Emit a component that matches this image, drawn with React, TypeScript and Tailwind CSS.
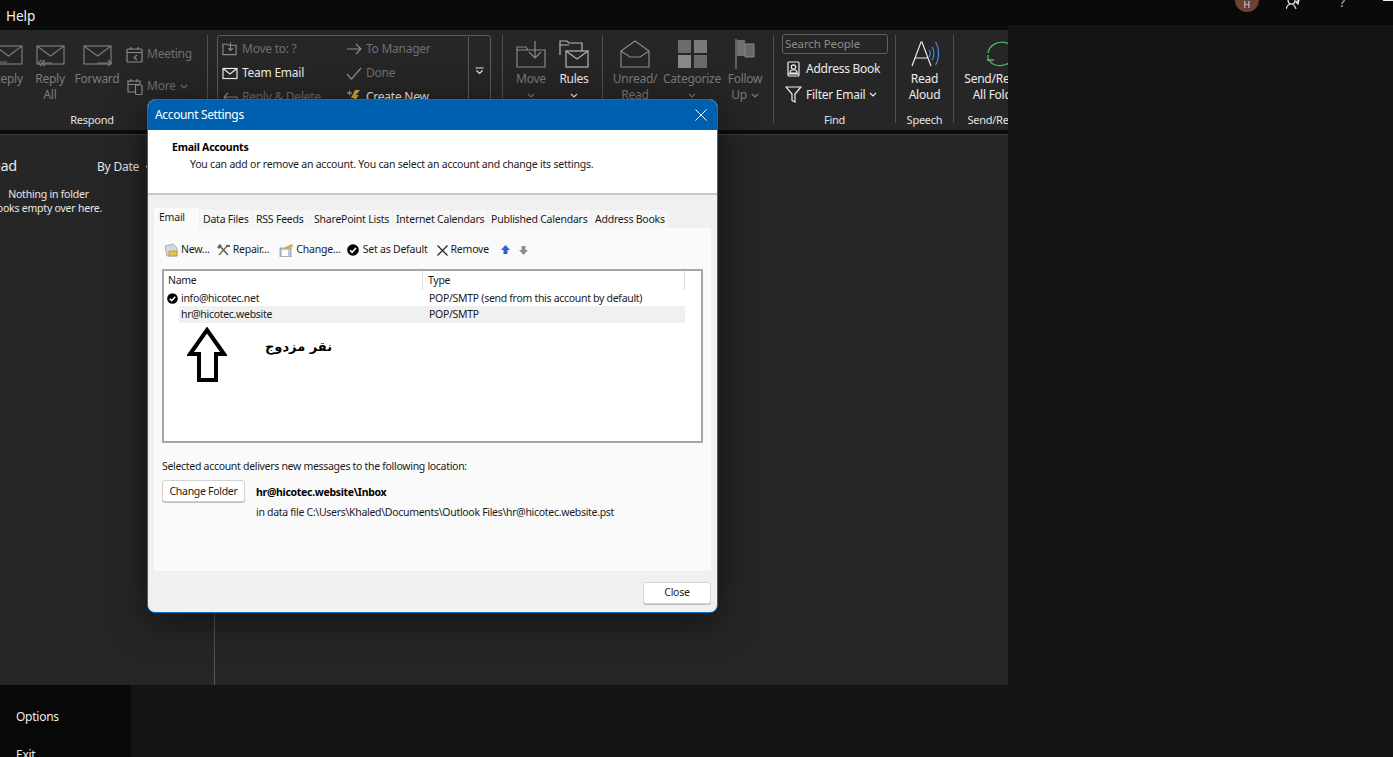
import type { ReactNode } from 'react';

// Outlook backstage behind the Account Settings dialog.

const Svg = ({ w = 28, h = 28, children, className = '' }: { w?: number; h?: number; children: ReactNode; className?: string }) => (
  <svg width={w} height={h} viewBox={`0 0 ${w} ${h}`} fill="none" stroke="currentColor" strokeWidth="1.2" className={className}>
    {children}
  </svg>
);

const Chevron = ({ className = '' }: { className?: string }) => (
  <svg width="8" height="5" viewBox="0 0 8 5" fill="none" stroke="currentColor" strokeWidth="1.2" className={className}>
    <path d="M1 1l3 3 3-3" />
  </svg>
);

const CheckDot = ({ size = 12 }: { size?: number }) => (
  <svg width={size} height={size} viewBox="0 0 12 12" className="shrink-0">
    <circle cx="6" cy="6" r="5.8" fill="#000" />
    <path d="M3 6.2l2.1 2.1L9 4" fill="none" stroke="#fff" strokeWidth="1.6" />
  </svg>
);

function RibbonBtn({ w, icon, lines, dim = false, chevron = false }: { w: number; icon: ReactNode; lines: string[]; dim?: boolean; chevron?: boolean }) {
  return (
    <div style={{ width: w }} className={`flex shrink-0 flex-col items-center pt-[10px] ${dim ? 'text-[#7b7b7b]' : 'text-[#ececec]'}`}>
      <div className="flex h-[28px] items-center justify-center">{icon}</div>
      <div className="mt-[3px] whitespace-nowrap text-center text-[12px] leading-[16px]">
        {lines.map((l, i) => (
          <div key={l} className="flex items-center justify-center gap-[4px]">
            {l}
            {chevron && lines.length > 1 && i === lines.length - 1 && <Chevron />}
          </div>
        ))}
        {chevron && lines.length === 1 && (
          <div className="flex h-[16px] items-center justify-center">
            <Chevron />
          </div>
        )}
      </div>
    </div>
  );
}

const RibbonDivider = ({ ml = 0 }: { ml?: number }) => (
  <div style={{ marginLeft: ml }} className="mt-[5px] h-[88px] w-px shrink-0 bg-[#505050]" />
);

function Group({ w, label, labelClass = '', children }: { w?: number; label: string; labelClass?: string; children: ReactNode }) {
  return (
    <div style={{ width: w }} className="flex shrink-0 flex-col">
      <div className="flex h-[78px] shrink-0">{children}</div>
      <div className={`shrink-0 text-center text-[11px] leading-[24px] text-[#e4e4e4] ${labelClass}`}>{label}</div>
    </div>
  );
}

const envelope = <><rect x="3" y="6" width="27" height="18" /><path d="M3 6l13.500 10L30 6" /></>;

function QuickStep({ icon, label, dim = false }: { icon: ReactNode; label: string; dim?: boolean }) {
  return (
    <div className={`flex h-[24px] items-center gap-[4px] whitespace-nowrap text-[12px] ${dim ? 'text-[#6f6f6f]' : 'text-[#ececec]'}`}>
      <span className="flex w-[16px] justify-center">{icon}</span>
      {label}
    </div>
  );
}

function Ribbon() {
  return (
    <div className="flex h-[100px] overflow-hidden bg-[#262626] font-['Noto_Sans',sans-serif] tracking-[-0.25px]">
      <div className="ml-[-13px] flex shrink-0">
        <Group label="Respond" labelClass="pr-[10px]">
          <RibbonBtn w={42} dim lines={['Reply']} icon={<Svg w={32} h={28}>{envelope}<path d="M15 22H5l3-3M5 22l3 3" /></Svg>} />
          <RibbonBtn w={42} dim lines={['Reply', 'All']} icon={<Svg w={32} h={28}>{envelope}<path d="M18 23H8l3-3M8 23l3 3M4 23l4-3M4 23l4 3" /></Svg>} />
          <RibbonBtn w={52} dim lines={['Forward']} icon={<Svg w={32} h={28}>{envelope}<path d="M16 23h14l-3-3M30 23l-3 3" /></Svg>} />
          <div className="flex w-[84px] flex-col pl-[3px] pt-[11px] text-[12px] text-[#6f6f6f]">
            <div className="flex h-[26px] items-center gap-[4px]">
              <Svg w={17} h={17} className="text-[#8a8a8a]"><rect x="1" y="3" width="15" height="13" rx="1" /><path d="M1 6.500h15M5 1v3M12 1v3M11 9l-3 2.500 3 2.500" /></Svg>
              Meeting
            </div>
            <div className="mt-[6px] flex h-[26px] items-center gap-[4px]">
              <Svg w={17} h={17} className="text-[#8a8a8a]"><path d="M9 14H2V3h12v3M1.500 6.500h12M5 1v3M11 1v3" /><rect x="9.500" y="7" width="6.500" height="9.500" rx="1" /></Svg>
              More
              <Chevron />
            </div>
          </div>
        </Group>
      </div>
      <RibbonDivider />
      <div className="ml-[9px] mt-[5px] flex h-[75px] w-[274px] shrink-0 rounded-[3px] border border-[#5c5c5c] pt-[1px]">
        <div className="flex w-[128px] shrink-0 flex-col pl-[4px]">
          <QuickStep dim label="Move to: ?" icon={<Svg w={17} h={16} className="text-[#8a8a8a]"><path d="M1 3h5l1 1h8v10H1zM9 1v8M6.500 7L9 9.500 11.500 7" /></Svg>} />
          <QuickStep label="Team Email" icon={<Svg w={16} h={13}><rect x="1" y="1.500" width="14" height="10" /><path d="M1 1.500l7 5.500 7-5.500" /></Svg>} />
          <QuickStep dim label="Reply & Delete" icon={<Svg w={16} h={14} className="text-[#8a8a8a]"><path d="M15 11V7H2M2 7l4-4M2 7l4 4" /></Svg>} />
        </div>
        <div className="flex w-[122px] shrink-0 flex-col">
          <QuickStep dim label="To Manager" icon={<Svg w={16} h={12} className="text-[#8a8a8a]"><path d="M1 6h14M10 1l5 5-5 5" /></Svg>} />
          <QuickStep dim label="Done" icon={<Svg w={16} h={13} className="text-[#8a8a8a]"><path d="M1 7l4.500 5L15 1" /></Svg>} />
          <QuickStep label="Create New" icon={
            <svg width="14" height="14" viewBox="0 0 14 14"><path d="M8 0h5L9 5h3L5 14l2-6H4z" fill="#e0a030" /><path d="M0 3h5M2.500 .5v5" stroke="#63b35a" strokeWidth="1.300" /></svg>
          } />
        </div>
        <div className="flex flex-1 justify-center border-l border-[#5c5c5c] pt-[30px] text-[#e4e4e4]">
          <svg width="9" height="8" viewBox="0 0 9 8" fill="none" stroke="currentColor" strokeWidth="1.2"><path d="M0.500 1h8M1.500 3.500L4.500 6.500 7.500 3.500" /></svg>
        </div>
      </div>
      <RibbonDivider ml={11} />
      <div className="ml-[6px] flex shrink-0">
        <RibbonBtn w={44} dim chevron lines={['Move']} icon={<Svg w={30} h={28} className="text-[#8a8a8a]"><path d="M1 7h9l2 3h17v17H1zM1 7v3h11M19 1v16M13 12l6 6 6-6" /></Svg>} />
        <RibbonBtn w={42} chevron lines={['Rules']} icon={<Svg w={30} h={30} className="text-[#b5b5b5]"><path d="M1 16V2h7l2 2h13v8M1 6h9" /><rect x="7" y="12" width="22" height="16" fill="#262626" /><path d="M7 12l11 8 11-8" /></Svg>} />
      </div>
      <RibbonDivider ml={7} />
      <div className="flex shrink-0 pl-[1px]">
        <RibbonBtn w={62} dim lines={['Unread/', 'Read']} icon={<Svg w={30} h={28} className="text-[#8a8a8a]"><path d="M1 11L15 1l14 10v16H1zM1 11l9 6h10l9-6" /></Svg>} />
        <RibbonBtn w={52} dim chevron lines={['Categorize']} icon={
          <svg width="29" height="28" viewBox="0 0 29 28"><path d="M0 0h13v13H0z" fill="#6b6b6b" /><path d="M16 0h13v13H16z" fill="#7a7a7a" /><path d="M0 15h13v13H0z" fill="#8a8a8a" /><path d="M16 15h13v13H16z" fill="#6b6b6b" /></svg>
        } />
        <RibbonBtn w={54} dim chevron lines={['Follow', 'Up']} icon={
          <svg width="20" height="30" viewBox="0 0 20 30"><path d="M1 0v30" stroke="#777" strokeWidth="1.500" /><path d="M2 1h8v16H2z" fill="#6f6f6f" /><path d="M10 5h9v13h-9z" fill="#666" stroke="#888" /></svg>
        } />
      </div>
      <RibbonDivider ml={1} />
      <Group w={121} label="Find">
        <div className="flex w-full flex-col pl-[8px] pt-[4px] text-[12px] text-[#ececec]">
          <div className="h-[20px] w-[106px] rounded-[3px] border border-[#5f5f5f] px-[2px] text-[11.500px] leading-[18px] tracking-[-0.1px] text-[#8c8c8c]">Search People</div>
          <div className="mt-[2px] flex h-[26px] items-center gap-[6px] whitespace-nowrap pl-[5px]">
            <Svg w={13} h={16}><rect x="1" y="1" width="11" height="14" rx="1" /><circle cx="6.500" cy="6" r="2.200" /><path d="M3 11c.500-3 6.500-3 7 0v1H3zM1 13h11" /></Svg>
            Address Book
          </div>
          <div className="flex h-[25px] items-center gap-[4px] whitespace-nowrap pl-[3px]">
            <Svg w={17} h={17}><path d="M1 1h15l-6 7v8l-3-1.500V8z" /></Svg>
            Filter Email
            <Chevron />
          </div>
        </div>
      </Group>
      <RibbonDivider />
      <Group w={57} label="Speech">
        <RibbonBtn w={57} lines={['Read', 'Aloud']} icon={
          <svg width="30" height="30" viewBox="0 0 30 30" fill="none" stroke="currentColor" strokeWidth="1.200">
            <path d="M2 27L11 3h1l9 24M5.500 19h13" />
            <path d="M19 11c1.500 2 1.500 5 0 7M22 8c2.500 3 2.500 10 0 13M25.500 3c4 6 4 17 0 23" stroke="#3f8fd6" />
          </svg>
        } />
      </Group>
      <RibbonDivider />
      <Group w={93} label="Send/Receive">
        <RibbonBtn w={93} lines={['Send/Receive', 'All Folders']} icon={
          <svg width="30" height="30" viewBox="0 0 30 30" fill="none" stroke="#54b765" strokeWidth="1.300">
            <path d="M2 14C3 6 14 0 23 5c2 1 3 3 4 5M28 17c-2 8-13 12-21 8-2-1-3-3-4-4M1 21h7M2 16v6" />
          </svg>
        } />
      </Group>
    </div>
  );
}

const tabs = [
  { label: 'Data Files', w: 52 },
  { label: 'RSS Feeds', w: 57 },
  { label: 'SharePoint Lists', w: 81 },
  { label: 'Internet Calendars', w: 94 },
  { label: 'Published Calendars', w: 103 },
  { label: 'Address Books', w: 76 },
];

function ToolItem({ icon, label, ml }: { icon: ReactNode; label: string; ml: number }) {
  return (
    <div style={{ marginLeft: ml }} className="flex shrink-0 items-center gap-[3px] whitespace-nowrap">
      {icon}
      {label}
    </div>
  );
}

function AccountDialog() {
  return (
    <div className="absolute left-[147px] top-[99px] flex h-[514px] w-[571px] flex-col overflow-hidden rounded-[8px] border border-[#0b6fc0] bg-[#f0f0f0] font-['Noto_Sans',sans-serif] text-[10.500px] tracking-[-0.22px] text-[#1a1a1a] shadow-[0_8px_40px_rgba(0,0,0,0.55)]">
      <div className="flex h-[30px] shrink-0 items-center justify-between bg-[#0060b0] pl-[7px] pr-[10px] text-[12px] tracking-[-0.35px] text-white">
        Account Settings
        <svg width="12" height="12" viewBox="0 0 12 12" stroke="#fff" strokeWidth="1"><path d="M.5.500l11 11M11.500.500l-11 11" /></svg>
      </div>
      <div className="h-[65px] shrink-0 border-b-2 border-[#c8c8c8] bg-white pl-[24px] pt-[9px]">
        <div className="font-bold leading-[16px] text-black">Email Accounts</div>
        <div className="ml-[18px] mt-[1px] leading-[16px]">You can add or remove an account. You can select an account and change its settings.</div>
      </div>
      <div className="mt-[13px] flex h-[20px] shrink-0 items-end pl-[6px]">
        <div className="h-[20px] w-[45px] bg-[#fafafa] pl-[5px] leading-[18px]">Email</div>
        <div className="flex h-[18px] items-start">
          {tabs.map((t) => (
            <div key={t.label} style={{ width: t.w }} className="ml-[1px] h-[18px] whitespace-nowrap bg-[#f6f6f6] pl-[3px] leading-[18px]">
              {t.label}
            </div>
          ))}
        </div>
      </div>
      <div className="mx-[6px] flex h-[343px] shrink-0 flex-col bg-[#fafafa] tracking-[-0.3px]">
        <div className="flex h-[41px] shrink-0 items-center pl-[10px] pt-[3px] tracking-[-0.22px]">
          <ToolItem ml={0} label="New..." icon={
            <svg width="14" height="14" viewBox="0 0 14 14"><path d="M1 3l8-2 4 4v8H3z" fill="#d8d8d8" stroke="#8a8a8a" strokeWidth=".6" /><path d="M5 8h8v5H5z" fill="#e6c050" stroke="#a98320" strokeWidth=".6" /></svg>
          } />
          <ToolItem ml={7} label="Repair..." icon={
            <svg width="13" height="13" viewBox="0 0 13 13" fill="none"><path d="M2 1l9 10" stroke="#555" strokeWidth="1.500" /><path d="M11 1L2 11" stroke="#8a6a30" strokeWidth="1.500" /><path d="M0 3l3-3 2 2-3 3zM9 1h4v2H9z" fill="#666" /></svg>
          } />
          <ToolItem ml={10} label="Change..." icon={
            <svg width="14" height="13" viewBox="0 0 14 13"><path d="M1 4h11v9H1z" fill="#b9cbe0" stroke="#6b7f95" strokeWidth=".6" /><path d="M3 6h6v6H3z" fill="#fff" /><path d="M6 3l7-3 1 3-7 2z" fill="#d9ac3c" /></svg>
          } />
          <ToolItem ml={6} label="Set as Default" icon={<span className="mr-[1px]"><CheckDot /></span>} />
          <ToolItem ml={9} label="Remove" icon={
            <svg width="11" height="11" viewBox="0 0 11 11" stroke="#222" strokeWidth="1.200"><path d="M.5.500l10 10M10.500.500l-10 10" /></svg>
          } />
          <svg width="9" height="10" viewBox="0 0 9 10" className="ml-[12px]"><path d="M4.500 0L9 5H6.500v4h-4V5H0z" fill="#2d63c8" /></svg>
          <svg width="9" height="10" viewBox="0 0 9 10" className="ml-[9px]"><path d="M4.500 10L9 5H6.500V1h-4v4H0z" fill="#8e8e8e" /></svg>
        </div>
        <div className="relative ml-[8px] h-[174px] w-[541px] shrink-0 border-2 border-[#a6a6a6] bg-white">
          <div className="flex h-[19px] items-center">
            <div className="h-full w-[259px] border-r border-[#dcdcdc] pl-[4px] leading-[18px]">Name</div>
            <div className="h-full w-[262px] border-r border-[#dcdcdc] pl-[5px] leading-[18px]">Type</div>
          </div>
          <div className="flex h-[16px] items-center leading-[16px]">
            <div className="flex w-[259px] items-center gap-[3px] pl-[3px]">
              <CheckDot size={11} />
              info@hicotec.net
            </div>
            <div className="pl-[6px]">POP/SMTP (send from this account by default)</div>
          </div>
          <div className="ml-[15px] flex h-[17px] w-[506px] items-center bg-[#f0f0f0] pt-[1px]">
            <div className="w-[244px] pl-[2px]">hr@hicotec.website</div>
            <div className="pl-[6px]">POP/SMTP</div>
          </div>
          {/* annotation pasted over the screenshot */}
          <svg width="40" height="56" viewBox="0 0 40 56" className="absolute left-[23px] top-[56px]">
            <path d="M20 3L37 27H29V53H12V27H3Z" fill="#fff" stroke="#000" strokeWidth="4" />
          </svg>
          <div dir="rtl" className="absolute left-[101px] top-[65px] font-['DejaVu_Sans',sans-serif] text-[13px] font-bold leading-[22px] tracking-normal text-black">
            نقر مزدوج
          </div>
        </div>
        <div className="ml-[8px] mt-[16px] leading-[14px]">Selected account delivers new messages to the following location:</div>
        <div className="ml-[8px] mt-[7px] flex">
          <div className="flex h-[22px] w-[83px] items-center justify-center rounded-[3px] border border-[#d2d2d2] bg-white pt-[1px] shadow-[0_1px_0_#bbb]">Change Folder</div>
          <div className="ml-[11px] pt-[4px] leading-[16px]">
            <div className="font-bold text-black">hr@hicotec.website\Inbox</div>
            <div className="mt-[4px]">in data file C:\Users\Khaled\Documents\Outlook Files\hr@hicotec.website.pst</div>
          </div>
        </div>
      </div>
      <div className="flex justify-end pr-[6px] pt-[11px]">
        <div className="flex h-[22px] w-[68px] items-center justify-center rounded-[3px] border border-[#d8d8d8] bg-white shadow-[0_1px_0_#bbb]">Close</div>
      </div>
    </div>
  );
}

export default function App() {
  return (
    <div className="relative flex h-[757px] w-[1393px] flex-col overflow-hidden bg-[#0a0a0a] font-['Noto_Sans',sans-serif]">
      <div className="flex h-[25px] shrink-0 items-start pl-[6px] text-[13.500px] leading-[32px] text-[#f2f2f2]">
        Help
        <div className="ml-auto flex h-[12px] items-start">
          <div className="mt-[-12px] flex h-[24px] w-[24px] items-end justify-center rounded-full bg-[#6e4232] text-[9px] leading-[14px] text-[#e8d8d0]">H</div>
          <svg width="14" height="9" viewBox="0 0 14 9" fill="none" stroke="#eee" strokeWidth="1.200" className="ml-[27px]">
            <path d="M2 0c0 3 2 4 4 4s3-2 3-4M0 9c1-3 3-5 5-5s4 2 5 5M10 2l3-2-1 4z" />
          </svg>
          <div className="ml-[40px] mt-[-8px] text-[12px] leading-[22px] text-[#cfcfcf]">?</div>
          <div className="ml-[38px] h-px w-[10px] bg-[#eee]" />
        </div>
      </div>
      <div className="flex flex-1">
        <div className="flex w-[1008px] shrink-0 flex-col">
          <div className="h-[5px] shrink-0 bg-[#0a0a0a]" />
          <Ribbon />
          <div className="h-[5px] shrink-0 border-b border-[#3d3d3d] bg-[#0c0c0c]" />
          <div className="flex h-[550px] shrink-0 bg-[#262626] text-[#e8e8e8]">
            <div className="w-[215px] shrink-0 overflow-hidden border-r border-[#555] tracking-[-0.22px]">
              <div className="flex items-start pt-[20px]">
                <div className="ml-[-36px] w-[53px] shrink-0 whitespace-nowrap text-right text-[14.500px] leading-[20px]">Unread</div>
                <div className="ml-[80px] mt-[2px] flex items-center gap-[6px] whitespace-nowrap text-[12px] leading-[20px]">
                  By Date
                  <Chevron />
                </div>
              </div>
              <div className="ml-[-8px] mt-[10px] w-[113px] text-center text-[10.500px] leading-[14px]">
                <div>Nothing in folder</div>
                <div className="ml-[-10px] whitespace-nowrap">It looks empty over here.</div>
              </div>
            </div>
            <div className="flex-1" />
          </div>
          <div className="flex flex-1">
            <div className="w-[131px] shrink-0 bg-[#080808] pl-[16px] pt-[22px] text-[12px] leading-[20px] tracking-[-0.25px] text-[#eee]">
              <div>Options</div>
              <div className="mt-[18px]">Exit</div>
            </div>
            <div className="flex-1 bg-[#141414]" />
          </div>
        </div>
        <div className="flex-1 bg-[#141414]" />
      </div>
      <AccountDialog />
    </div>
  );
}
